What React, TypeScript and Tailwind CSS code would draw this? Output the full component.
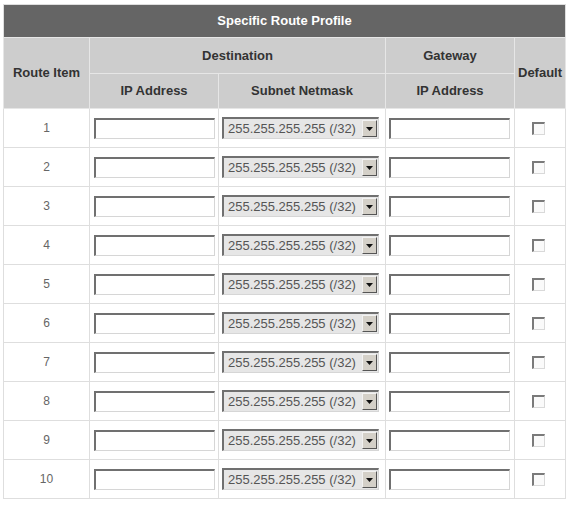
const rows = Array.from({ length: 10 }, (_, i) => i + 1)

function TextBox() {
  return (
    <div className="h-[21px] w-[121px] border-t-2 border-l-2 border-r border-b border-t-[#707070] border-l-[#707070] border-r-[#d6d6d6] border-b-[#d6d6d6] bg-white" />
  )
}

function MaskSelect() {
  return (
    <div className="flex h-[22px] w-[157px] items-center border-t-2 border-l-2 border-r border-b border-t-[#707070] border-l-[#707070] border-r-[#d6d6d6] border-b-[#d6d6d6] bg-[#e6e6e6]">
      <span className="flex-1 pl-[4px] text-[13px] leading-none text-[#555]">255.255.255.255 (/32)</span>
      <span className="mr-[1px] flex h-[17px] w-[15px] items-center justify-center border border-t-[#f2f2f2] border-l-[#f2f2f2] border-r-[#555] border-b-[#555] bg-[#d4d0c8]">
        <svg width="7" height="4" viewBox="0 0 7 4">
          <path d="M0 0h7L3.5 4z" fill="#111" />
        </svg>
      </span>
    </div>
  )
}

function CheckBox() {
  return (
    <div className="ml-[17px] h-[13px] w-[13px] border-t-2 border-l-2 border-r border-b border-t-[#7a7a7a] border-l-[#7a7a7a] border-r-[#d9d9d9] border-b-[#d9d9d9] bg-[#fafafa]" />
  )
}

export default function App() {
  return (
    <div className="h-[506px] w-[570px] bg-white pl-[3px] pt-[4px] font-['Liberation_Sans',Arial,sans-serif]">
      <table className="w-[562px] table-fixed border-collapse border border-[#dedede]">
        <colgroup>
          <col className="w-[86px]" />
          <col className="w-[129px]" />
          <col className="w-[167px]" />
          <col className="w-[129px]" />
          <col className="w-[51px]" />
        </colgroup>
        <thead>
          <tr className="h-[33px] bg-[#656565]">
            <th colSpan={5} className="text-center text-[13px] font-bold text-white">
              Specific Route Profile
            </th>
          </tr>
          <tr className="h-[36px] bg-[#cdcdcd] text-[13px] font-bold text-[#333]">
            <th rowSpan={2} className="border border-[#e6e6e6]">Route Item</th>
            <th colSpan={2} className="border border-[#e6e6e6]">Destination</th>
            <th className="border border-[#e6e6e6]">Gateway</th>
            <th rowSpan={2} className="border border-[#e6e6e6]">Default</th>
          </tr>
          <tr className="h-[35px] bg-[#cdcdcd] text-[13px] font-bold text-[#333]">
            <th className="border border-[#e6e6e6]">IP Address</th>
            <th className="border border-[#e6e6e6]">Subnet Netmask</th>
            <th className="border border-[#e6e6e6]">IP Address</th>
          </tr>
        </thead>
        <tbody>
          {rows.map((n) => (
            <tr key={n} className="h-[39px]">
              <td className="border border-[#dedede] text-center text-[12px] text-[#666]">{n}</td>
              <td className="border border-[#dedede] pl-[4px]">
                <TextBox />
              </td>
              <td className="border border-[#dedede] pl-[3px]">
                <MaskSelect />
              </td>
              <td className="border border-[#dedede] pl-[3px]">
                <TextBox />
              </td>
              <td className="border border-[#dedede]">
                <CheckBox />
              </td>
            </tr>
          ))}
        </tbody>
      </table>
    </div>
  )
}
